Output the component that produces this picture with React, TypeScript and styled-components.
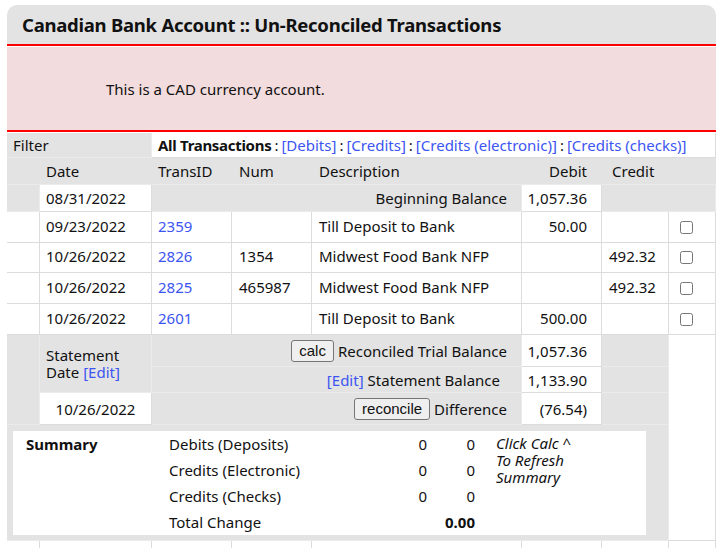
import * as React from 'react';
import styled, { createGlobalStyle } from 'styled-components';

const GlobalStyle = createGlobalStyle`
	html, body {
		margin: 0;
		padding: 0;
		background: #ffffff;
	}
	body {
		font-family: 'Noto Sans', 'DejaVu Sans', sans-serif;
		font-size: 15px;
		color: #111111;
	}
`;

const Page = styled.div`
	padding: 5px 3px 0 7px;
`;

const Panel = styled.div`
	width: 709px;
`;

const TitleBar = styled.div`
	height: 39px;
	background-color: #e3e3e3;
	border-radius: 10px 10px 0 0;
	border-bottom: 2px solid #ff0000;
	display: flex;
	align-items: center;
	padding-left: 15px;
`;

const Title = styled.h2`
	margin: 0;
	font-size: 18.5px;
	letter-spacing: -0.25px;
	font-weight: 700;
	color: #111111;
`;

const Notice = styled.div`
	height: 83px;
	background-color: #f2dcdd;
	border-bottom: 2px solid #ff0000;
	display: flex;
	align-items: center;
	padding-left: 99px;
	margin-top: 1px;
`;

const Grid = styled.div`
	margin-top: 1px;
	display: grid;
	grid-template-columns: 33px 112px 80px 80px 210px 80px 67px 47px;
	grid-template-rows: 25px 27px 27px 31px 30px 31px 31px 32px 26px 32px 116px 31px;
`;

type CellProps = {
	$white?: boolean;
	$span?: number;
	$rows?: number;
	$align?: 'left' | 'right' | 'center';
	$pad?: string;
	$plain?: boolean;
};

const Cell = styled.div<CellProps>`
	box-sizing: border-box;
	grid-column: span ${(p) => p.$span || 1};
	grid-row: span ${(p) => p.$rows || 1};
	background-color: ${(p) => (p.$white ? '#ffffff' : '#e3e3e3')};
	border-right: 1px solid ${(p) => (p.$plain ? 'transparent' : p.$white ? '#dcdcdc' : '#ebebeb')};
	border-bottom: 1px solid ${(p) => (p.$white ? '#dcdcdc' : '#ebebeb')};
	display: flex;
	align-items: center;
	justify-content: ${(p) => (p.$align === 'right' ? 'flex-end' : p.$align === 'center' ? 'center' : 'flex-start')};
	padding: ${(p) => p.$pad || '0 6px'};
	white-space: nowrap;
	gap: 4px;
`;

// transaction rows sit a little high in their cells
const TxCell = styled(Cell)`
	padding-bottom: 3px;
`;

const Link = styled.a`
	color: #3c55f2;
	text-decoration: none;
	cursor: pointer;
`;

const Strong = styled.b`
	font-weight: 700;
	letter-spacing: -0.3px;
`;

const Sep = styled.span`
	margin: 0 3px;
`;

const Box = styled.input.attrs({ type: 'checkbox' })`
	width: 13px;
	height: 13px;
	margin: 0;
`;

const Btn = styled.button`
	font-family: 'Liberation Sans', Arial, sans-serif;
	font-size: 15px;
	color: #111111;
	background-color: #efefef;
	border: 1px solid #767676;
	border-radius: 3px;
	padding: 1px 7px;
	height: 22px;
	cursor: pointer;
`;

const StatementLabel = styled.div`
	line-height: 17px;
	white-space: normal;
`;

const SummaryBox = styled.div`
	align-self: stretch;
	flex: 1;
	margin: 6px 22px 5px 6px;
	background-color: #ffffff;
	display: grid;
	grid-template-columns: 143px 220px 38px 48px 1fr;
	grid-auto-rows: 26px;
	padding: 0 0 0 13px;
	align-content: start;
`;

const SumCell = styled.div<{ $num?: boolean; $bold?: boolean }>`
	display: flex;
	align-items: center;
	justify-content: ${(p) => (p.$num ? 'flex-end' : 'flex-start')};
	font-weight: ${(p) => (p.$bold ? 700 : 400)};
`;

const Note = styled.div`
	grid-column: 5;
	grid-row: 1 / span 3;
	padding: 4px 0 0 21px;
	font-style: italic;
	line-height: 17px;
`;

type Tx = {
	date: string;
	id: string;
	num: string;
	desc: string;
	debit: string;
	credit: string;
};

const rows: Tx[] = [
	{ date: '09/23/2022', id: '2359', num: '', desc: 'Till Deposit to Bank', debit: '50.00', credit: '' },
	{ date: '10/26/2022', id: '2826', num: '1354', desc: 'Midwest Food Bank NFP', debit: '', credit: '492.32' },
	{ date: '10/26/2022', id: '2825', num: '465987', desc: 'Midwest Food Bank NFP', debit: '', credit: '492.32' },
	{ date: '10/26/2022', id: '2601', num: '', desc: 'Till Deposit to Bank', debit: '500.00', credit: '' },
];

const summary = [
	{ label: 'Debits (Deposits)', a: '0', b: '0' },
	{ label: 'Credits (Electronic)', a: '0', b: '0' },
	{ label: 'Credits (Checks)', a: '0', b: '0' },
];

const App = () => {
	return (
		<Page>
			<GlobalStyle />
			<Panel>
				<TitleBar>
					<Title>Canadian Bank Account :: Un-Reconciled Transactions</Title>
				</TitleBar>
				<Notice>This is a CAD currency account.</Notice>
				<Grid>
					{/* filter */}
					<Cell $span={2}>Filter</Cell>
					<Cell $span={6} $white>
						<span>
							<Strong>All Transactions</Strong>
							<Sep>:</Sep>
							<Link>[Debits]</Link>
							<Sep>:</Sep>
							<Link>[Credits]</Link>
							<Sep>:</Sep>
							<Link>[Credits (electronic)]</Link>
							<Sep>:</Sep>
							<Link>[Credits (checks)]</Link>
						</span>
					</Cell>

					{/* column heads */}
					<Cell $plain />
					<Cell $plain>Date</Cell>
					<Cell $plain>TransID</Cell>
					<Cell $plain $pad="0 7px">Num</Cell>
					<Cell $plain $pad="0 7px">Description</Cell>
					<Cell $plain $align="right" $pad="0 14px">Debit</Cell>
					<Cell $plain $pad="0 10px">Credit</Cell>
					<Cell $plain />

					{/* beginning balance */}
					<Cell />
					<Cell $white>08/31/2022</Cell>
					<Cell $span={3} $align="right" $pad="0 14px">Beginning Balance</Cell>
					<Cell $white $align="right" $pad="0 14px">1,057.36</Cell>
					<Cell $span={2} />

					{rows.map((r) => (
						<React.Fragment key={r.id}>
							<TxCell $white />
							<TxCell $white>{r.date}</TxCell>
							<TxCell $white>
								<Link>{r.id}</Link>
							</TxCell>
							<TxCell $white $pad="0 7px">{r.num}</TxCell>
							<TxCell $white $pad="0 7px">{r.desc}</TxCell>
							<TxCell $white $align="right" $pad="0 14px">{r.debit}</TxCell>
							<TxCell $white $pad="0 7px">{r.credit}</TxCell>
							<Cell $white $pad="0 0 0 11px">
								<Box />
							</Cell>
						</React.Fragment>
					))}

					{/* statement */}
					<Cell $rows={3} />
					<Cell $rows={2}>
						<StatementLabel>
							Statement
							<br />
							Date <Link>[Edit]</Link>
						</StatementLabel>
					</Cell>
					<Cell $span={3} $align="right" $pad="0 14px">
						<Btn>calc</Btn>
						Reconciled Trial Balance
					</Cell>
					<Cell $white $align="right" $pad="0 14px">1,057.36</Cell>
					<Cell />
					<Cell $white $rows={4} />

					<Cell $span={3} $align="right" $pad="0 21px 0 14px">
						<Link>[Edit]</Link>
						Statement Balance
					</Cell>
					<Cell $white $align="right" $pad="0 14px">1,133.90</Cell>
					<Cell />

					<Cell $white $align="center">10/26/2022</Cell>
					<Cell $span={3} $align="right" $pad="0 14px">
						<Btn>reconcile</Btn>
						Difference
					</Cell>
					<Cell $white $align="right" $pad="0 14px">(76.54)</Cell>
					<Cell />

					{/* summary */}
					<Cell $span={7} $pad="0">
						<SummaryBox>
							<SumCell $bold>Summary</SumCell>
							<SumCell>{summary[0].label}</SumCell>
							<SumCell $num>{summary[0].a}</SumCell>
							<SumCell $num>{summary[0].b}</SumCell>
							<Note>
								Click Calc ^
								<br />
								To Refresh
								<br />
								Summary
							</Note>
							{summary.slice(1).map((s) => (
								<React.Fragment key={s.label}>
									<SumCell />
									<SumCell>{s.label}</SumCell>
									<SumCell $num>{s.a}</SumCell>
									<SumCell $num>{s.b}</SumCell>
								</React.Fragment>
							))}
							<SumCell />
							<SumCell>Total Change</SumCell>
							<SumCell />
							<SumCell $num $bold>0.00</SumCell>
						</SummaryBox>
					</Cell>

					{/* next row */}
					{Array.from({ length: 8 }).map((_, i) => (
						<Cell key={i} $white />
					))}
				</Grid>
			</Panel>
		</Page>
	);
};

export default App;
